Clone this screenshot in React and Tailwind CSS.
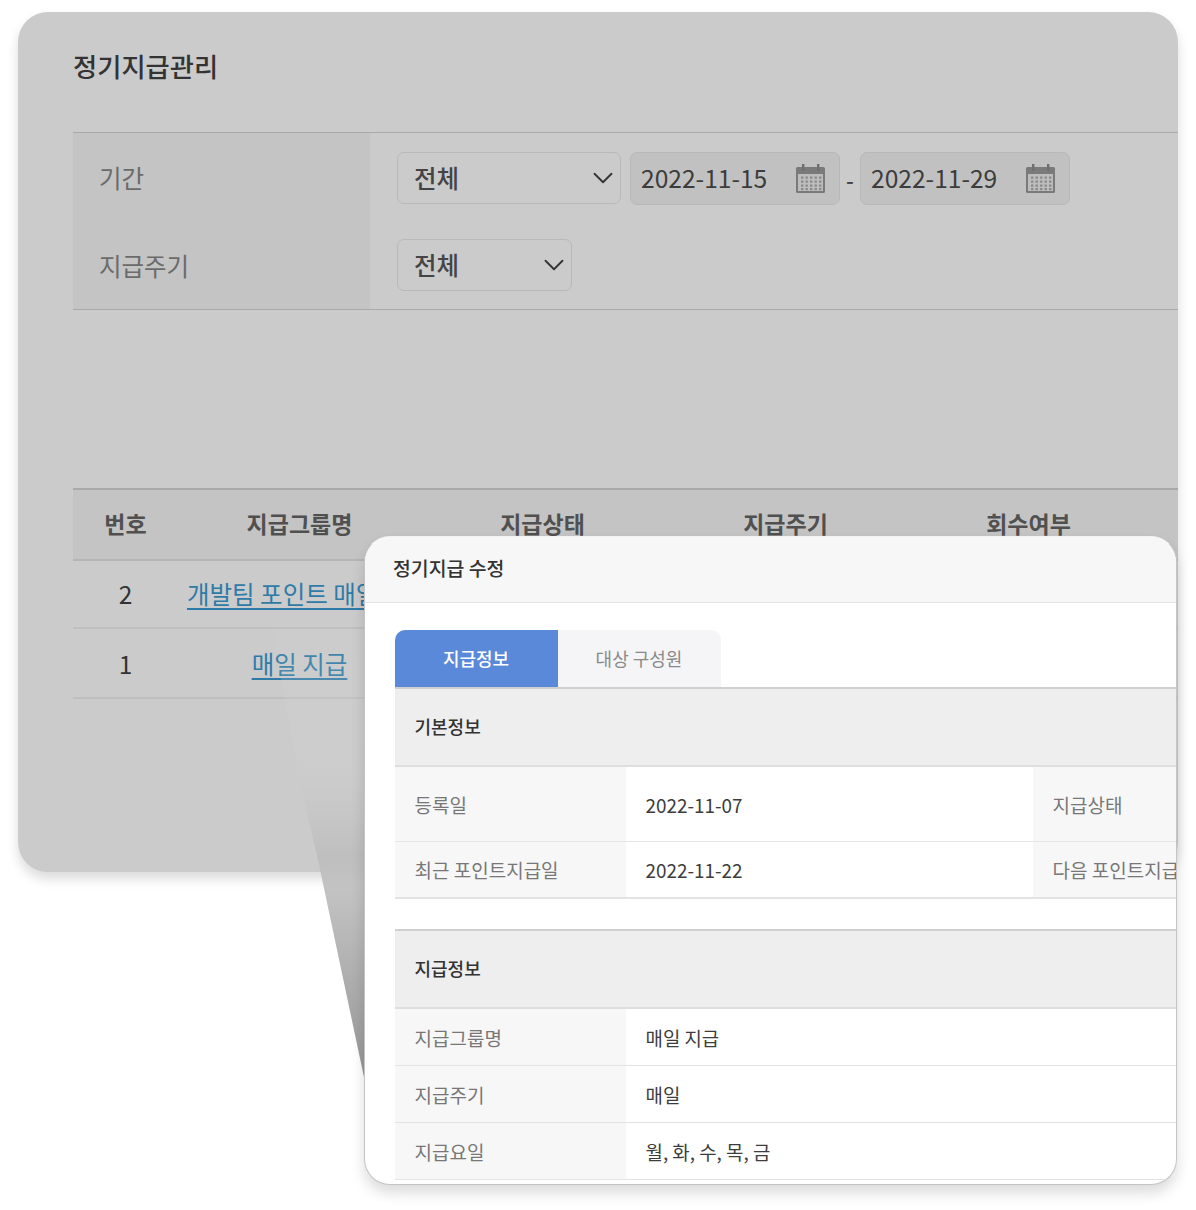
import { ChevronDown } from 'lucide-react'

function Select({ width }) {
  return (
    <div className={`flex h-[52px] ${width} items-center justify-between rounded-[7px] border border-[#b9b9b9] pl-4 text-[24.5px] font-medium text-[#444444]`}>
      <span>전체</span>
      <ChevronDown size={34} strokeWidth={1.3} className="text-[#333333]" />
    </div>
  )
}

function CalendarIcon() {
  return (
    <svg width="32" height="32" viewBox="0 0 32 32" className="shrink-0">
      <rect x="2" y="5" width="29" height="26" rx="1.5" fill="#7a7a7a" />
      <rect x="4" y="12" width="25" height="17" fill="#bdbdbd" />
      <rect x="8" y="2" width="2.4" height="7" fill="#6f6f6f" />
      <rect x="23" y="2" width="2.4" height="7" fill="#6f6f6f" />
      {[14.5, 18.5, 22.5, 26].map((y) =>
        [7, 11.5, 16, 20.5, 25].map((x) => (
          <rect key={`${x}-${y}`} x={x} y={y} width="2.4" height="2.2" fill="#8a8a8a" />
        ))
      )}
    </svg>
  )
}

function DateBox({ value }) {
  return (
    <div className="flex h-[53px] w-[210px] items-center justify-between rounded-[7px] border border-[#b8b8b8] bg-[#c1c1c1] pb-[2px] pl-[10px] pr-[13px] text-[24.6px] text-[#3c3c3c]">
      <span>{value}</span>
      <CalendarIcon />
    </div>
  )
}

function Row({ height, border, children }) {
  return (
    <div className={`flex ${height} ${border} w-[900px]`}>{children}</div>
  )
}

function Label({ children }) {
  return (
    <div className="flex w-[231px] shrink-0 items-center bg-[#f7f7f7] pl-5 pt-[2px] text-[19px] whitespace-nowrap text-[#777777]">{children}</div>
  )
}

function Value({ children }) {
  return (
    <div className="flex w-[407px] shrink-0 items-center pl-5 pt-[2px] text-[18.9px] text-[#3d3d3d]">{children}</div>
  )
}

function SectionHead({ height, children }) {
  return (
    <div className={`flex ${height} items-start border-y-2 border-t-[#cfcfcf] border-b-[#dedede] bg-[#eeeeee] pl-5 pt-[24px] text-[18px] font-medium leading-[26px] text-[#333333]`}>
      {children}
    </div>
  )
}

export default function App() {
  const cols = 'grid grid-cols-[105px_243px_243px_243px_243px]'
  return (
    <div className="relative h-[1210px] w-[1196px] overflow-hidden bg-white font-['Noto_Sans_CJK_KR','Noto_Sans',sans-serif]">
      <div className="pt-3 pl-[18px]">
        <div className="h-[860px] w-[1160px] overflow-hidden rounded-[30px] bg-[#cbcbcb] pl-[55px] shadow-[0_7px_12px_rgba(0,0,0,0.14)]">
          <h1 className="pt-[34px] text-[26.3px] leading-[40px] font-medium text-[#333333]">정기지급관리</h1>

          <div className="mt-[46px] flex h-[178px] border-y border-t-[#a9a9a9] border-b-[#a9a9a9]">
            <div className="flex w-[297px] shrink-0 flex-col bg-[#c4c4c4] pl-[26px] text-[24.5px] text-[#6b6b6b]">
              <div className="flex h-[89px] items-center pt-[2px]">기간</div>
              <div className="flex h-[87px] items-center pt-[2px]">지급주기</div>
            </div>
            <div className="flex flex-col pl-[27px] pt-[19px]">
              <div className="flex items-start">
                <Select width="w-[224px]" />
                <div className="ml-[9px]"><DateBox value="2022-11-15" /></div>
                <span className="w-5 pt-[11px] text-center text-[22px] font-medium text-[#444444]">-</span>
                <DateBox value="2022-11-29" />
              </div>
              <div className="mt-[34px]">
                <Select width="w-[175px]" />
              </div>
            </div>
          </div>

          <div className="mt-[178px] text-[24.5px]">
            <div className={`${cols} h-[73px] items-center border-y-2 border-t-[#a9a9a9] border-b-[#b5b5b5] bg-[#c4c4c4] pb-[2px] text-center font-bold text-[#505050] text-[23px]`}>
              <div>번호</div>
              <div>지급그룹명</div>
              <div>지급상태</div>
              <div>지급주기</div>
              <div>회수여부</div>
            </div>
            <div className={`${cols} h-[68px] items-center border-b-2 border-[#bfbfbf] text-center text-[#333333]`}>
              <div>2</div>
              <div className="whitespace-nowrap pl-[9px] text-left text-[#2e7ba8] underline underline-offset-4">개발팀 포인트 매일 지급</div>
            </div>
            <div className={`${cols} h-[70px] items-center border-b-2 border-[#bfbfbf] pt-[2px] text-center text-[#333333]`}>
              <div>1</div>
              <div className="text-[#2e7ba8] underline underline-offset-4">매일 지급</div>
            </div>
          </div>
        </div>
      </div>

      {/* tail from the row to the popup */}
      <svg className="absolute left-[265px] top-[610px]" width="110" height="480" viewBox="0 0 110 480">
        <defs>
          <linearGradient id="tail" x1="0" y1="0" x2="0" y2="1">
            <stop offset="0" stopColor="#d8d8d8" stopOpacity="0" />
            <stop offset="0.3" stopColor="#d0d0d0" stopOpacity="0.35" />
            <stop offset="0.52" stopColor="#bdbdbd" stopOpacity="0.9" />
            <stop offset="0.6" stopColor="#c2c2c2" />
            <stop offset="1" stopColor="#969696" />
          </linearGradient>
        </defs>
        <path d="M5 0 Q24 130 53 250 L100 472 L110 472 L110 0 Z" fill="url(#tail)" />
      </svg>

      <div className="absolute left-[364px] top-[536px] h-[649px] w-[813px] overflow-hidden rounded-[26px] border-[1.5px] border-[#c4c4c4] border-t-[#f2f2f2] bg-white shadow-[0_8px_14px_rgba(0,0,0,0.14)]">
        <div className="flex h-[66px] items-center border-b border-[#e3e3e3] bg-[#f7f7f7] pl-7 pb-[4px] text-[19.4px] font-medium text-[#333333]">
          정기지급 수정
        </div>
        <div className="pl-[29.5px] pt-[27px]">
          <div className="flex h-[57px] text-[18px]">
            <div className="flex w-[163px] items-center justify-center rounded-tl-[10px] bg-[#5b89d9] font-medium text-white">지급정보</div>
            <div className="flex w-[163px] items-center justify-center rounded-tr-[10px] bg-[#f5f5f7] text-[#8a8a8a]">대상 구성원</div>
          </div>

          <SectionHead height="h-[80px]">기본정보</SectionHead>
          <Row height="h-[75px]" border="border-b border-[#e6e6e6]">
            <Label>등록일</Label>
            <Value>2022-11-07</Value>
            <Label>지급상태</Label>
          </Row>
          <Row height="h-[57px]" border="border-b-2 border-[#e3e3e3]">
            <Label>최근 포인트지급일</Label>
            <Value>2022-11-22</Value>
            <Label>다음 포인트지급일</Label>
          </Row>

          <div className="mt-[30px]">
            <SectionHead height="h-[80px]">지급정보</SectionHead>
          </div>
          <Row height="h-[57px]" border="border-b border-[#e3e3e3]">
            <Label>지급그룹명</Label>
            <Value>매일 지급</Value>
          </Row>
          <Row height="h-[57px]" border="border-b border-[#e3e3e3]">
            <Label>지급주기</Label>
            <Value>매일</Value>
          </Row>
          <Row height="h-[57px]" border="border-b border-[#e3e3e3]">
            <Label>지급요일</Label>
            <Value>월, 화, 수, 목, 금</Value>
          </Row>
        </div>
      </div>
    </div>
  )
}
